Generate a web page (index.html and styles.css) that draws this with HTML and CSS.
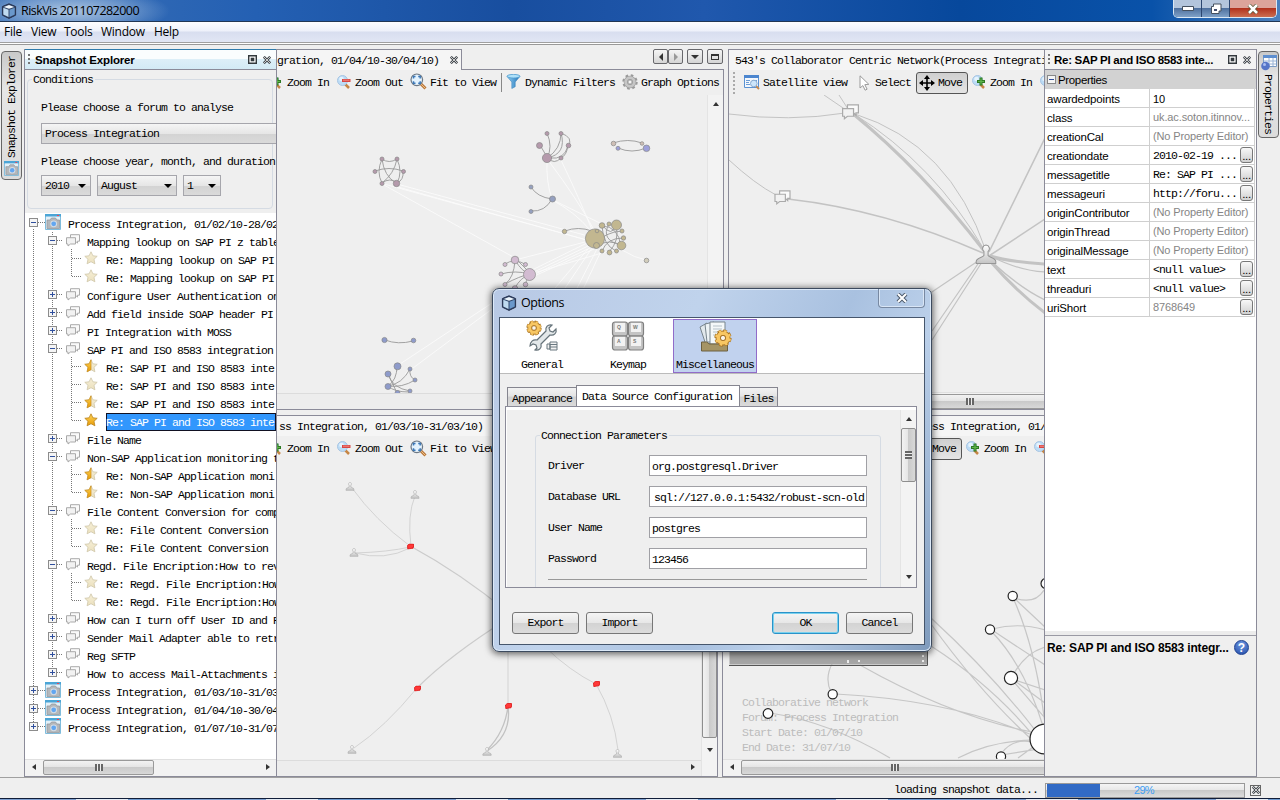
FILE: index.html
```html
<!DOCTYPE html>
<html lang="en">
<head>
<meta charset="utf-8">
<title>RiskVis 201107282000</title>
<link rel="stylesheet" href="styles.css">
</head>
<body>
<svg class="defs" width="0" height="0">
  <defs>
    <linearGradient id="gStar" x1="0" x2="0" y1="0" y2="1"><stop offset="0" stop-color="#ffd65a"/><stop offset="1" stop-color="#e79a05"/></linearGradient>
    <linearGradient id="gPale" x1="0" x2="0" y1="0" y2="1"><stop offset="0" stop-color="#f6efd8"/><stop offset="1" stop-color="#ebe0bd"/></linearGradient>
    <linearGradient id="gFunnel" x1="0" x2="1"><stop offset="0" stop-color="#8fd0f2"/><stop offset="1" stop-color="#2272b8"/></linearGradient>
    <linearGradient id="gGray" x1="0" x2="0" y1="0" y2="1"><stop offset="0" stop-color="#fff"/><stop offset="1" stop-color="#c4c4c4"/></linearGradient>
    <symbol id="cube" viewBox="0 0 16 16"><path d="M8 .8l6.600 2.700v8.700L8 15.400 1.400 12.200V3.500z" fill="#33486c" stroke="#26324f"/><path d="M8 1.900l5.200 2L8 5.800 2.800 3.900z" fill="#edf5fc"/><path d="M2.300 4.800L7.500 6.700v7.300l-5.200-2.500z" fill="#bfdaf0"/><path d="M13.700 4.800L8.500 6.700v7.300l5.200-2.500z" fill="#6a98cb"/></symbol>
    <symbol id="camera" viewBox="0 0 16 16"><path d="M.5 .5h15v15H.5z" fill="#e3f0f8" stroke="#7fbcdc"/><path d="M0 0h16v2.500H0z" fill="#4ba5d6"/><path d="M12 1h2v1h-2z" fill="#e45"/><path d="M2 6h3l1.500-2h4L12 6h2.500v8.500H2z" fill="#b4b7ba" stroke="#909498" stroke-width=".7"/><circle cx="8.700" cy="9.800" r="3.400" fill="#d5dce4"/><circle cx="8.700" cy="9.800" r="2.400" fill="#62a6f0"/></symbol>
    <symbol id="chat" viewBox="0 0 14 13"><path d="M4.500 .7h9v6.500h-2v2l-2-2h-5z" fill="#fafafa" stroke="#aaa"/><path d="M.5 3.700h9v6.300h-5l-2.500 2V10H.5z" fill="#f2f2f2" stroke="#aaa"/></symbol>
    <symbol id="star0" viewBox="0 0 14 14"><path d="M7 .8l1.900 4 4.300.500-3.200 3 .9 4.500L7 10.700l-3.900 2.100.9-4.500-3.200-3 4.300-.5z" fill="url(#gPale)" stroke="#cfc7a9" stroke-width=".8"/></symbol>
    <symbol id="star2" viewBox="0 0 14 14"><path d="M7 .8l1.900 4 4.300.500-3.200 3 .9 4.500L7 10.700l-3.900 2.100.9-4.500-3.200-3 4.300-.5z" fill="url(#gStar)" stroke="#b9821a" stroke-width=".8"/></symbol>
    <symbol id="star1" viewBox="0 0 14 14"><use href="#star0"/><path d="M7 .8v9.900l-3.900 2.100.9-4.500-3.200-3 4.300-.5z" fill="url(#gStar)" stroke="#c98c1c" stroke-width=".7"/></symbol>
    <symbol id="lens" viewBox="0 0 14 14"><path d="M8 9l4 4" stroke="#c68645" stroke-width="2.500"/><circle cx="5.500" cy="5.500" r="5" fill="#bcdcf6" stroke="#a7c4e2"/><circle cx="4.500" cy="4" r="2.300" fill="#e5f3fd"/></symbol>
    <symbol id="zin" viewBox="0 0 14 14"><use href="#lens"/><path d="M9 2.500v8M5 6.500h8" stroke="#2d7a24" stroke-width="3"/><path d="M9 3.500v6M6 6.500h6" stroke="#5fb54c" stroke-width="1.200"/></symbol>
    <symbol id="zout" viewBox="0 0 14 14"><use href="#lens"/><path d="M5 5.500h8.500" stroke="#d94744" stroke-width="3"/><path d="M6 5.200h6.500" stroke="#f28b86" stroke-width="1"/></symbol>
    <symbol id="fit" viewBox="0 0 17 17"><path d="M10.500 10.500l5 5" stroke="#b9773c" stroke-width="3"/><path d="M11 11l4.500 4.500" stroke="#efc183" stroke-width="1"/><circle cx="6.800" cy="6.800" r="5.800" fill="#e3f2fd" stroke="#6d7884" stroke-width="1.200"/><path d="M3.500 5.500v-2h2M8.200 3.500h2v2M10.200 8.200v2h-2M5.500 10.200h-2v-2" fill="none" stroke="#3c78b8" stroke-width="1.500"/></symbol>
    <symbol id="funnel" viewBox="0 0 14 15"><path d="M.6 2.500L5.300 8v6.500l3.400-1.800V8l4.700-5.500z" fill="url(#gFunnel)" stroke="#3e87bf" stroke-width=".6"/><ellipse cx="7" cy="2.200" rx="6.500" ry="1.800" fill="#aee0f8" stroke="#4b9bd0" stroke-width=".8"/></symbol>
    <symbol id="gear" viewBox="0 0 16 16"><circle cx="8" cy="8" r="6.500" fill="none" stroke="#9a9a9a" stroke-width="2.400" stroke-dasharray="2.550 2.550"/><circle cx="8" cy="8" r="4.300" fill="none" stroke="#9a9a9a" stroke-width="4"/><circle cx="8" cy="8" r="4.300" fill="none" stroke="#c6c6c6" stroke-width="2.800"/><circle cx="8" cy="8" r="2" fill="#f4f4f4" stroke="#888" stroke-width=".7"/></symbol>
    <symbol id="goldgear" viewBox="0 0 18 18"><circle cx="9" cy="9" r="7.100" fill="none" stroke="#a87322" stroke-width="3" stroke-dasharray="3.700 1.870"/><circle cx="9" cy="9" r="5" fill="none" stroke="#a87322" stroke-width="5"/><circle cx="9" cy="9" r="7" fill="none" stroke="#f8c763" stroke-width="2" stroke-dasharray="2.500 3.070" stroke-dashoffset="-.6"/><circle cx="9" cy="9" r="4.800" fill="none" stroke="#f8c763" stroke-width="3.600"/><circle cx="9" cy="9" r="2.600" fill="#faf6ee" stroke="#a87322"/></symbol>
    <symbol id="sat" viewBox="0 0 16 15"><path d="M.5 .5h14v12H.5z" fill="#f4f8fd" stroke="#5a92d3"/><path d="M0 0h15v3H0z" fill="#4c86cf"/><path d="M2 5.500h4M2 7.500h3M2 9.500h4M8 5.500h5" stroke="#6c9dd6"/><path d="M12 11l3 3" stroke="#c58a50" stroke-width="2"/><circle cx="9.800" cy="8.500" r="3.300" fill="#cde6fb" stroke="#89abd0"/></symbol>
    <symbol id="cursor" viewBox="0 0 11 16"><path d="M1 .8l8.800 8.500-4 .4 2.300 4.500-2 1-2.200-4.600L1 13z" fill="#fff" stroke="#9a9a9a"/></symbol>
    <symbol id="move" viewBox="0 0 16 16"><path d="M8 2v12M2 8h12" stroke="#000" stroke-width="1.600"/><path d="M8 0l3 4H5zM8 16l3-4H5zM0 8l4-3v6zM16 8l-4-3v6z"/></symbol>
    <symbol id="x" viewBox="0 0 8 8"><path d="M.8 .8l6.400 6.400M7.200 .8L.8 7.200" stroke="#484d52" stroke-width="2.600"/><path d="M.8 .8l6.400 6.400M7.200 .8L.8 7.200" stroke="#eee" stroke-width=".8"/></symbol>
    <symbol id="pin" viewBox="0 0 9 9"><path d="M.7 .7h7.600v7.600H.7z" fill="#fff" stroke="#33393d" stroke-width="1.400"/><path d="M2.700 2.700h3.600v3.600H2.700z" fill="#33393d"/></symbol>
    <symbol id="person" viewBox="0 0 20 20"><path d="M10 1a3.400 3.400 0 0 1 2 6v4c1 2 7 2 7.300 5.500v2H.7v-2C1 13 7 13 8 11V7a3.400 3.400 0 0 1 2-6z" fill="url(#gGray)" stroke="#969696"/></symbol>
    <symbol id="chip" viewBox="0 0 7 6"><path d="M2.200 .5h4.300v3.300H6v1H5L.8 5.600.5 2z" fill="#ff3838" stroke="#dc1212" stroke-width=".8"/></symbol>
  </defs>
</svg>

<header class="titlebar">
  <svg class="app-icon"><use href="#cube"/></svg><span>RiskVis 201107282000</span>
  <div class="win-controls">
    <b class="wc"><svg width="12" height="6"><path d="M.5 .5h11v4H.5z" fill="#fff" stroke="#44505f"/></svg></b>
    <b class="wc"><svg width="12" height="12"><path d="M3.500 1h7.500v7h-2v2.500H1.500v-7h2z" fill="#fff" stroke="#44505f"/><path d="M4 6h3v2H4z" fill="#44506f"/></svg></b>
    <b class="wc close"><svg width="12" height="10"><path d="M2 1l8 8M10 1L2 9" stroke="#553" stroke-width="4"/><path d="M2 1l8 8M10 1L2 9" stroke="#fff" stroke-width="2.500"/></svg></b>
  </div>
</header>
<nav class="menubar"><span>File</span><span>View</span><span>Tools</span><span>Window</span><span>Help</span></nav>

<main class="workspace">
  <aside class="rail">
    <div class="rail-tab left"><svg class="i15"><use href="#camera"/></svg><span>Snapshot Explorer</span></div>
  </aside>

  <section class="explorer">
    <h2 class="view-head active"><i class="grip"></i><span>Snapshot Explorer</span><svg class="i9"><use href="#pin"/></svg><svg class="i8"><use href="#x"/></svg></h2>
    <div class="cond-wrap">
      <div class="cond"><span class="legend">Conditions</span>
        <label>Please choose a forum to analyse</label>
        <div class="combo forum">Process Integration</div>
        <label class="l2">Please choose year, month, and duration</label>
        <div class="combos"><div class="combo c1">2010<i></i></div><div class="combo c2">August<i></i></div><div class="combo c3">1<i></i></div></div>
      </div>
    </div>
    <div class="tree">
      <svg class="tree-lines" viewBox="25 213 251 546"><path d="M33.500 229V727M34 222.500h11M34 690.500h11M34 708.500h11M34 726.500h11M52.500 232V673M53 240.500h9M53 294.500h9M53 312.500h9M53 330.500h9M53 348.500h9M53 438.500h9M53 456.500h9M53 510.500h9M53 564.500h9M53 618.500h9M53 636.500h9M53 654.500h9M53 672.500h9M71.500 249v28M72 258.500h10M72 276.500h10M71.500 357v64M72 366.500h10M72 384.500h10M72 402.500h10M72 420.500h10M71.500 465v28M72 474.500h10M72 492.500h10M71.500 519v28M72 528.500h10M72 546.500h10M71.500 573v28M72 582.500h10M72 600.500h10"/></svg>
      <ul>
        <li class="d1 open"><i></i><svg><use href="#camera"/></svg><span>Process Integration, 01/02/10-28/02</span></li>
        <li class="d2 open"><i></i><svg><use href="#chat"/></svg><span>Mapping lookup on SAP PI z table</span></li>
        <li class="d3"><svg><use href="#star0"/></svg><span>Re: Mapping lookup on SAP PI</span></li>
        <li class="d3"><svg><use href="#star0"/></svg><span>Re: Mapping lookup on SAP PI</span></li>
        <li class="d2"><i></i><svg><use href="#chat"/></svg><span>Configure User Authentication on</span></li>
        <li class="d2"><i></i><svg><use href="#chat"/></svg><span>Add field inside SOAP header PI</span></li>
        <li class="d2"><i></i><svg><use href="#chat"/></svg><span>PI Integration with MOSS</span></li>
        <li class="d2 open"><i></i><svg><use href="#chat"/></svg><span>SAP PI and ISO 8583 integration</span></li>
        <li class="d3"><svg><use href="#star1"/></svg><span>Re: SAP PI and ISO 8583 inte</span></li>
        <li class="d3"><svg><use href="#star0"/></svg><span>Re: SAP PI and ISO 8583 inte</span></li>
        <li class="d3"><svg><use href="#star1"/></svg><span>Re: SAP PI and ISO 8583 inte</span></li>
        <li class="d3 sel"><svg><use href="#star2"/></svg><span>Re: SAP PI and ISO 8583 inte</span></li>
        <li class="d2"><i></i><svg><use href="#chat"/></svg><span>File Name</span></li>
        <li class="d2 open"><i></i><svg><use href="#chat"/></svg><span>Non-SAP Application monitoring t</span></li>
        <li class="d3"><svg><use href="#star1"/></svg><span>Re: Non-SAP Application moni</span></li>
        <li class="d3"><svg><use href="#star1"/></svg><span>Re: Non-SAP Application moni</span></li>
        <li class="d2 open"><i></i><svg><use href="#chat"/></svg><span>File Content Conversion for comp</span></li>
        <li class="d3"><svg><use href="#star0"/></svg><span>Re: File Content Conversion</span></li>
        <li class="d3"><svg><use href="#star0"/></svg><span>Re: File Content Conversion</span></li>
        <li class="d2 open"><i></i><svg><use href="#chat"/></svg><span>Regd. File Encription:How to rev</span></li>
        <li class="d3"><svg><use href="#star0"/></svg><span>Re: Regd. File Encription:How</span></li>
        <li class="d3"><svg><use href="#star0"/></svg><span>Re: Regd. File Encription:How</span></li>
        <li class="d2"><i></i><svg><use href="#chat"/></svg><span>How can I turn off User ID and P</span></li>
        <li class="d2"><i></i><svg><use href="#chat"/></svg><span>Sender Mail Adapter able to retr</span></li>
        <li class="d2"><i></i><svg><use href="#chat"/></svg><span>Reg SFTP</span></li>
        <li class="d2"><i></i><svg><use href="#chat"/></svg><span>How to access Mail-Attachments i</span></li>
        <li class="d1"><i></i><svg><use href="#camera"/></svg><span>Process Integration, 01/03/10-31/03</span></li>
        <li class="d1"><i></i><svg><use href="#camera"/></svg><span>Process Integration, 01/04/10-30/04</span></li>
        <li class="d1"><i></i><svg><use href="#camera"/></svg><span>Process Integration, 01/07/10-31/07</span></li>
      </ul>
    </div>
    <div class="hscroll"><b class="arr l"></b><div class="thumb ex"><i></i></div><b class="arr r"></b></div>
  </section>

  <section class="editors">
    <div class="erow top">
      <div class="pane p1">
        <div class="tabs"><div class="tab">gration, 01/04/10-30/04/10)<svg class="i8"><use href="#x"/></svg></div>
          <div class="tab-btns"><b><i class="tl"></i></b><b><i class="tr"></i></b><b class="sp"><i class="td"></i></b><b class="sp2"><i class="tm"></i></b></div></div>
        <div class="body">
          <div class="tools cut"><svg class="z"><use href="#zin"/></svg><span>Zoom In</span><svg class="z g"><use href="#zout"/></svg><span>Zoom Out</span><svg class="fit"><use href="#fit"/></svg><span>Fit to View</span><i class="sep"></i><svg class="fn"><use href="#funnel"/></svg><span>Dynamic Filters</span><svg class="gr"><use href="#gear"/></svg><span>Graph Options</span></div>
          <div class="view">
            <div class="canvas-col">
            <svg class="canvas" viewBox="277 95 430 298" preserveAspectRatio="xMinYMin slice">
              <g fill="none" stroke="#fafafa" stroke-width=".9"><path d="M384 185L515 258M384 184L587 240M397 184L588 236M398 187L590 241M547 160Q546 182 552 199M548 160Q578 200 594 230M561 160Q580 200 592 230M552 200Q575 212 590 230M553 200L610 228M515 260L589 241M528 272L587 243M530 274L590 245M533 275L592 247M530 278L594 249M545 300L588 249M557 300L592 248M571 300L598 247M578 300L603 247M622 250Q635 258 646 260M397 366L492 303M405 374L492 309M616 249L530 274"/></g>
              <g fill="none" stroke="#999" stroke-width=".9"><path d="M382 159Q389 164 397 159M375 171Q389 166 403 171M382 159Q376 172 382 183M382 159Q384 176 396 183M397 159Q394 174 382 183M397 159Q403 172 397 183M382 183Q390 177 397 183M403 171Q404 180 397 183M547 133Q553 147 547 158M561 133Q561 149 547 158M561 133Q567 154 547 158M561 133Q574 138 568 146Q564 160 550 158M540 145L547 157M568 145Q567 155 561 158M561 158Q554 165 548 158M613 143Q628 138 642 143M618 148Q632 154 646 148M531 187Q537 197 552 199M531 211Q545 212 552 199M565 231Q578 226 592 231M602 225Q612 238 616 225M609 224Q600 240 621 245M602 226Q603 245 616 251M622 231Q605 232 595 244M623 238Q607 238 602 251M616 226Q620 240 609 252M596 246Q610 238 622 246M602 226Q618 226 621 246M505 264Q514 258 525 264M515 260Q514 278 505 284M515 260Q522 272 530 274M501 274Q515 270 530 274M505 284Q520 276 530 274M515 288Q520 278 530 274M515 258L530 273M525 284L530 274M385 340Q398 345 413 341M397 366Q397 380 388 386M388 374Q392 388 410 391M410 369Q402 384 388 386M410 369Q409 377 415 380M415 380Q402 388 388 386M388 386Q394 392 409 392M397 393Q392 382 388 374"/></g>
              <g stroke="#888" stroke-width=".7">
                <g fill="#b59aac"><circle cx="382" cy="159" r="2"/><circle cx="397" cy="159" r="2"/><circle cx="375" cy="171.500" r="2"/><circle cx="403.500" cy="171.500" r="2"/><circle cx="382" cy="183.500" r="2"/><circle cx="396.500" cy="183.500" r="3.200"/><circle cx="547" cy="133.500" r="2"/><circle cx="561" cy="133.500" r="2"/><circle cx="539.500" cy="145.500" r="3"/><circle cx="568.500" cy="145.500" r="2.300"/><circle cx="547" cy="158" r="4.600"/><circle cx="561" cy="158" r="2"/></g>
                <g fill="#cfbfb5"><circle cx="613.500" cy="143.500" r="2.300"/><circle cx="642" cy="143.500" r="1.800"/><circle cx="646.500" cy="260.500" r="2.300" fill="#d2cdbb"/></g>
                <g fill="#9da0da"><circle cx="618" cy="148.300" r="2"/><circle cx="646.500" cy="148.300" r="3.300"/></g>
                <g fill="#95a0c0"><circle cx="531" cy="187" r="2"/><circle cx="552.500" cy="199" r="3"/><circle cx="531" cy="211.500" r="2"/></g>
                <g fill="#8e9bcb"><circle cx="384.500" cy="340" r="2.600"/><circle cx="413.500" cy="340.500" r="2.300"/><circle cx="397.500" cy="366.300" r="3.500"/><circle cx="388" cy="374" r="3"/><circle cx="410" cy="369" r="2"/><circle cx="415" cy="380" r="2"/><circle cx="388" cy="386.500" r="3"/><circle cx="410" cy="391" r="2"/><circle cx="397.500" cy="393" r="2.500"/></g>
                <g fill="#c2b790"><circle cx="595" cy="238.500" r="9.600"/><circle cx="616.500" cy="225" r="5"/><circle cx="621.500" cy="245.500" r="4.300"/><circle cx="602" cy="225.500" r="2.800"/><circle cx="609" cy="224" r="2"/><circle cx="622" cy="231" r="2"/><circle cx="623.500" cy="238" r="2.200"/><circle cx="596.500" cy="245.500" r="3"/><circle cx="597" cy="231" r="1.800"/><circle cx="602" cy="251" r="2"/><circle cx="609.500" cy="252.500" r="2.400"/><circle cx="616.500" cy="251" r="2"/><circle cx="564.500" cy="231.500" r="2.200"/></g>
                <g fill="#d2bbd1"><circle cx="515" cy="260" r="3.800"/><circle cx="505" cy="264.500" r="2"/><circle cx="525.500" cy="264.500" r="2"/><circle cx="529.500" cy="274.500" r="6"/><circle cx="501" cy="274" r="2"/><circle cx="505" cy="284.500" r="2"/><circle cx="525.500" cy="284.500" r="2.300"/><circle cx="515" cy="288.500" r="2.800"/></g>
              </g>
            </svg>
            <div class="htrack"></div></div>
            <div class="vscroll"><b class="arr u"></b></div>
          </div>
        </div>
      </div>
      <div class="pane p2">
        <div class="tabs"><div class="tab wide">543's Collaborator Centric Network(Process Integration)</div></div>
        <div class="body">
          <div class="tools"><i class="grip"></i><svg class="st"><use href="#sat"/></svg><span>Satellite view</span><i class="sep"></i><svg class="cu"><use href="#cursor"/></svg><span>Select</span><b class="pressed"><svg class="i16"><use href="#move"/></svg>Move</b><svg class="z m5"><use href="#zin"/></svg><span>Zoom In</span><svg class="z g"><use href="#zout"/></svg></div>
          <svg class="canvas" viewBox="729 95 315 297" preserveAspectRatio="xMinYMin slice">
            <g fill="none" stroke="#c3c3c3"><path d="M824 95L846 110M839 95L848 109M729 114Q790 122 845 113M729 160Q755 184 776 195"/><path d="M788 199Q885 210 983 253" stroke-width="1.500"/><path d="M852 113Q922 170 985 252" stroke-width="3"/><path d="M854 114Q934 164 985 251"/><path d="M855 114Q950 144 986 251"/><path d="M989 252L1045 138M989 256L1045 219" stroke-width="1.600"/><path d="M990 256Q1010 262 1045 264" stroke-width="3"/><path d="M990 256Q1020 271 1045 272M978 261L920 300M980 261L932 331M982 262L932 340" stroke-width="1.200"/><path d="M991 262Q1015 290 1045 313" stroke-width="3"/><path d="M992 262Q1020 288 1045 300" stroke-width="1.500"/></g>
            <use href="#chat" x="842" y="104" width="17" height="16"/><use href="#chat" x="774" y="190" width="17" height="15"/><use href="#person" x="975" y="244" width="22" height="21"/>
          </svg>
          <div class="hscroll"><div class="thumb tr-thumb"><i></i></div></div>
        </div>
      </div>
    </div>
    <div class="erow bottom">
      <div class="pane p3">
        <div class="tabs"><div class="tab wide pl">ss Integration, 01/03/10-31/03/10)</div></div>
        <div class="body">
          <div class="tools cut"><svg class="z"><use href="#zin"/></svg><span>Zoom In</span><svg class="z g"><use href="#zout"/></svg><span>Zoom Out</span><svg class="fit"><use href="#fit"/></svg><span>Fit to View</span></div>
          <div class="view">
            <div class="canvas-col">
            <svg class="canvas" viewBox="277 461 424 299" preserveAspectRatio="xMinYMin slice">
              <g fill="none" stroke="#d3d3d3"><path d="M352 488Q375 520 410 546M415 496Q407 515 411 546M355 553Q388 552 410 547M355 553Q385 561 410 548"/><path d="M412 547Q460 573 509 613" stroke="#cbcbcb" stroke-width="1.200"/><path d="M509 618Q450 655 417 688" stroke="#cbcbcb" stroke-width="1.200"/><path d="M417 688Q385 727 354 748M508 640V706M545 647Q570 671 596 684Q614 715 618 750"/><path d="M508 706Q505 732 487 750M508 706Q512 735 487 751" stroke="#c2c2c2" stroke-width="1.300"/></g>
              <use href="#person" x="345.500" y="482" width="9" height="9"/><use href="#person" x="410.500" y="490" width="9" height="9"/><use href="#person" x="349.500" y="548" width="9" height="9"/><use href="#person" x="347.500" y="745" width="9" height="9"/><use href="#person" x="482" y="747" width="10" height="9"/><use href="#person" x="613" y="749" width="9" height="9"/>
              <use href="#chip" x="407" y="543.500" width="7" height="6"/><use href="#chip" x="414" y="685.500" width="7" height="6"/><use href="#chip" x="505" y="703" width="7" height="6"/><use href="#chip" x="593" y="681" width="7" height="6"/>
            </svg>
            <div class="htrack"><b class="arr r"></b></div></div>
            <div class="vscroll"><div class="vthumb"></div><b class="arr d"></b></div>
          </div>
        </div>
      </div>
      <div class="pane p4">
        <div class="tabs"><div class="tab wide"><span class="p4t">Network(Process Integration, 01/07/10)</span></div></div>
        <div class="body">
          <div class="tools"><b class="pressed p4m"><svg class="i16"><use href="#move"/></svg>Move</b><svg class="z m5"><use href="#zin"/></svg><span>Zoom In</span><svg class="z g"><use href="#zout"/></svg></div>
          <div class="canvas-box">
            <svg class="canvas" viewBox="723 461 322 298" preserveAspectRatio="xMinYMin slice">
              <g fill="none" stroke="#c6c6c6" stroke-width="1.200"><path d="M931 618Q990 672 1035 730M931 624Q980 692 1030 738M931 646Q990 684 1032 734M833 662Q824 678 831 692M836 694Q950 700 1032 735M860 665Q950 716 1032 732M770 713Q830 722 890 758M1014 598Q1035 605 1044 590M1014 598L1045 627M1014 600Q1036 650 1045 724M992 629Q1020 622 1045 630M992 630L1045 665M992 632Q1024 665 1043 726M1013 675Q1025 653 1045 647M1015 680L1045 690M1015 681L1045 703M1014 682L1045 718M958 758Q990 741 1032 740M1001 754Q1012 738 1032 742M1001 755L1045 748M1018 758L1040 742"/></g>
            </svg>
            <div class="net-info">Collaborative network<br>Forum: Process Integration<br>Start Date: 01/07/10<br>End Date: 31/07/10</div>
            <svg class="canvas over" viewBox="723 461 322 298" preserveAspectRatio="xMinYMin slice">
              <path d="M729.500 600H927.500V664.500H729.500z" fill="#a6a6a6"/><path d="M729 665.500H927.500V600" fill="none" stroke="#555"/><path d="M847 660h2v3h-2zM858 660h2v2h-2zM922 655h2v2h-2zM922 660h2v2h-2z" fill="#eee"/>
              <g fill="#fff" stroke="#222" stroke-width="1.200"><circle cx="1012.700" cy="596" r="4.600"/><circle cx="1046" cy="583.500" r="5"/><circle cx="990" cy="629.500" r="4.600"/><circle cx="1011" cy="678" r="6.600"/><circle cx="832.700" cy="694.300" r="4.600"/><circle cx="768" cy="713.500" r="4.800"/><circle cx="1001" cy="756.500" r="4.600"/><circle cx="1045" cy="739" r="15"/></g>
            </svg>
          </div>
          <div class="hscroll"><b class="arr l"></b><div class="thumb br-thumb"><i></i></div></div>
        </div>
      </div>
    </div>
  </section>

  <section class="props">
    <h2 class="view-head"><i class="grip"></i><span>Re: SAP PI and ISO 8583 inte...</span><svg class="i9"><use href="#pin"/></svg><svg class="i8"><use href="#x"/></svg></h2>
    <div class="cat"><i></i>Properties</div>
    <div class="prow"><span>awardedpoints</span><em class="dk">10</em></div>
    <div class="prow"><span>class</span><em>uk.ac.soton.itinnov...</em></div>
    <div class="prow"><span>creationCal</span><em>(No Property Editor)</em></div>
    <div class="prow"><span>creationdate</span><em class="mono">2010-02-19 ...</em><b>...</b></div>
    <div class="prow"><span>messagetitle</span><em class="mono">Re: SAP PI ...</em><b>...</b></div>
    <div class="prow"><span>messageuri</span><em class="mono">http://foru...</em><b>...</b></div>
    <div class="prow"><span>originContributor</span><em>(No Property Editor)</em></div>
    <div class="prow"><span>originThread</span><em>(No Property Editor)</em></div>
    <div class="prow"><span>originalMessage</span><em>(No Property Editor)</em></div>
    <div class="prow"><span>text</span><em class="mono">&lt;null value&gt;</em><b>...</b></div>
    <div class="prow"><span>threaduri</span><em class="mono">&lt;null value&gt;</em><b>...</b></div>
    <div class="prow"><span>uriShort</span><em>8768649</em><b>...</b></div>
    <div class="prop-desc"><strong>Re: SAP PI and ISO 8583 integr...</strong><b class="help">?</b></div>
  </section>

  <aside class="rail right">
    <div class="rail-tab rt"><svg class="i16" viewBox="0 0 16 16"><path d="M2.500 .5h13v11h-13z" fill="#fff" stroke="#7c9cc4"/><path d="M2 0h14v3H2z" fill="#5e8fd0"/><path d="M3 6h12M3 9h12M8 3v8M12 3v8" stroke="#9ab4d6"/><circle cx="4.500" cy="11" r="4.300" fill="#5575c8"/><circle cx="3.500" cy="9.500" r="1.500" fill="#a9bdf0"/></svg><span>Properties</span></div>
  </aside>
</main>

<footer class="status"><span>loading snapshot data...</span><div class="progress"><div class="bar" style="width:27%"></div><span>29%</span></div><b class="stop"><svg class="i8"><use href="#x"/></svg></b></footer>
<div class="taskbar"></div>

<section class="dialog">
  <div class="dlg-title"><svg class="app-icon"><use href="#cube"/></svg><span>Options</span><b><svg width="12" height="10"><path d="M2 1l8 8M10 1L2 9" stroke="#4d5a6c" stroke-width="4"/><path d="M2 1l8 8M10 1L2 9" stroke="#fff" stroke-width="2"/></svg></b></div>
  <div class="dlg-body">
    <div class="cats">
      <div class="catbtn"><svg viewBox="0 0 34 32"><use href="#goldgear" x="1" y="0" width="16" height="16"/><path d="M27 5c-4-1-7 2-6 6l-9 9c-4-1-7 2-7 6l3-2 3 1 1 3-2 2c4 1 7-2 6-6l9-9c4 1 7-2 6-6l-3 3-3-1-1-3z" fill="#e3e8ea" stroke="#66737a" stroke-width="1.200"/><path d="M22 24h3v5h-3zM25 22h7v8h-7zM25 24.500h7M25 27h7" fill="#f2f2f2" stroke="#6a7880"/></svg>General</div>
      <div class="catbtn"><svg viewBox="0 0 34 32"><g fill="#c4c4c4" stroke="#808080" stroke-width="1.200"><rect x="1.500" y="2" width="15" height="14" rx="2.500"/><rect x="17.500" y="2" width="15" height="14" rx="2.500"/><rect x="1.500" y="16" width="15" height="14" rx="2.500"/><rect x="17.500" y="16" width="15" height="14" rx="2.500"/></g><g fill="#f2f2f2"><rect x="4" y="3" width="10" height="9"/><rect x="20" y="3" width="10" height="9"/><rect x="4" y="17" width="10" height="9"/><rect x="20" y="17" width="10" height="9"/></g><g class="keys"><text x="6" y="9">Q</text><text x="22" y="9">W</text><text x="6" y="23">A</text><text x="22" y="23">S</text></g></svg>Keymap</div>
      <div class="catbtn on"><svg viewBox="0 0 34 32"><path d="M2 7l7-4 4 20-5 2z" fill="#e1e8ec" stroke="#78858d"/><path d="M7 4l9-2 2 20H9z" fill="#edf3f5" stroke="#78858d"/><path d="M12 2h15v22H12z" fill="#f4f8f9" stroke="#78858d"/><path d="M15 6h9M15 9h9M15 12h7M15 15h7" stroke="#b5c1c8"/><path d="M3.500 22h5l3 2h18v7h-26z" fill="#a59465" stroke="#6d6040"/><use href="#goldgear" x="16" y="9" width="18" height="18"/></svg>Miscellaneous</div>
    </div>
    <div class="dtabs"><span class="t-app">Appearance</span><span class="t-on">Data Source Configuration</span><span class="t-files">Files</span></div>
    <div class="dpanel">
      <div class="form">
        <div class="fs"><span class="legend">Connection Parameters</span>
          <div class="fr"><label>Driver</label><div>org.postgresql.Driver</div></div>
          <div class="fr"><label>Database URL</label><div class="rt-field">sql://127.0.0.1:5432/robust-scn-old</div></div>
          <div class="fr"><label>User Name</label><div>postgres</div></div>
          <div class="fr"><label>Password</label><div>123456</div></div>
          <hr>
        </div>
      </div>
      <div class="vscroll dl"><b class="arr u"></b><div class="dthumb"><i></i></div><b class="arr d"></b></div>
    </div>
    <div class="dbtns"><button>Export</button><button>Import</button><button class="ok">OK</button><button>Cancel</button></div>
  </div>
</section>
</body>
</html>
```

FILE: styles.css
```css
* { box-sizing: border-box; }
body {
  margin: 0; width: 1280px; height: 800px; overflow: hidden; position: relative;
  display: flex; flex-direction: column; background: #efefef; color: #000;
  font: 11.500px/14px "Liberation Mono", monospace; letter-spacing: -.9px;
  white-space: nowrap; cursor: default;
}
svg { flex: none; display: block; }
.defs { position: absolute; }
i { font-style: normal; }
ul { list-style: none; margin: 0; padding: 0; }
.i8 { width: 8px; height: 8px; }
.i9 { width: 9px; height: 9px; }
.i15 { width: 15px; height: 15px; }
.i16 { width: 16px; height: 16px; }

/* Window frame */
.titlebar {
  height: 22px; flex: none; display: flex; align-items: center; padding-left: 1px;
  background: radial-gradient(ellipse 100px 24px at 70px 11px, rgba(190,210,232,.85), rgba(150,182,220,.6) 55%, transparent 100%), linear-gradient(90deg, #3c71b6, #2460b3 20%, #184e9f 40%, #2058ad 55%, #07489c 75%, #0952a9 90%, #4b80bd);
  border-bottom: 1px solid #223755;
  font: 12.500px/20px "Open Sans", sans-serif; letter-spacing: -.55px;
}
.app-icon { width: 16px; height: 16px; margin-right: 4px; }
.win-controls { margin-left: auto; margin-right: 3px; align-self: flex-start; display: flex; border: 1px solid #dbe8f4; border-top: 0; border-radius: 0 0 5px 5px; overflow: hidden; }
.wc { width: 28px; height: 17px; display: flex; align-items: center; justify-content: center; border-right: 1px solid #2b4670; background: linear-gradient(#b3c5dc 0 45%, #4f719f 50%, #7fa1c7); }
.wc.close { width: 46px; border-right: 0; background: linear-gradient(#dca49a 0 45%, #b2331e 50%, #cc6e50); }
.menubar { height: 20px; flex: none; display: flex; padding-left: 4px; background: linear-gradient(#fdfdff, #eef1fa 45%, #d8deef 50%, #e1e6f4); font: 12px/19px "Open Sans", sans-serif; letter-spacing: -.25px; }
.menubar span:nth-child(1) { width: 27px; }
.menubar span:nth-child(2) { width: 33px; }
.menubar span:nth-child(3) { width: 37px; }
.menubar span:nth-child(4) { width: 53px; }

.workspace { height: 735px; flex: none; display: flex; padding-top: 7px; position: relative; background: linear-gradient(#a0a0a0 0 1px, #fff 1px 2px, #999 2px 3px, #efefef 3px); }
.rail { width: 24px; flex: none; padding: 2px 2px 0 1px; }
.right { width: 23px; padding-left: 1px; }
.rail-tab { width: 21px; border: 1.500px solid #666; border-radius: 4px; background: linear-gradient(#c9c9c9, #e6e6e6 30%, #dcdcdc); display: flex; flex-direction: column; align-items: center; }
.rail-tab span { writing-mode: vertical-rl; line-height: 17px; }
.rail-tab.left { height: 129px; flex-direction: column-reverse; padding-bottom: 3px; }
.left span { transform: rotate(180deg); margin-bottom: 3px; }
.rt { height: 87px; padding-top: 3px; }
.rt span { margin-top: 3px; }

/* Snapshot explorer */
.explorer { width: 253px; height: 728px; flex: none; display: flex; flex-direction: column; border: 1px solid #8b8b99; border-top: 0; overflow: hidden; }
.view-head { margin: 0; height: 21px; flex: none; display: flex; align-items: center; padding: 0 5px 0 3px; border-top: 1px solid #9393a1; border-bottom: 1px solid #8b8b99; background: #f3f3f3; font: bold 11.500px/18px "Liberation Sans", sans-serif; letter-spacing: -.15px; }
.view-head.active { border-top-color: #2f7bab; background: linear-gradient(#fafdfe 0 45%, #ddeff8 50%, #d3eaf5); }
.props .view-head { letter-spacing: -.28px; }
.props .grip { margin-right: 4px; }
.view-head span { flex: 1; }
.view-head .i9 { margin-right: 6px; }
.grip { width: 2px; height: 12px; margin-right: 5px; background: repeating-linear-gradient(#777 0 2px, transparent 2px 4px); flex: none; }
.cond-wrap { height: 143px; flex: none; padding: 9px 3px 4px 2px; }
.cond { height: 130px; border: 1px solid #d5dbe3; border-radius: 4px; position: relative; padding: 21px 0 0 13px; display: flex; flex-direction: column; align-items: flex-start; }
.legend { position: absolute; top: -7px; left: 4px; background: #efefef; padding: 0 2px 0 1px; line-height: 14px; }
.combo { border: 1px solid #a6a6ac; height: 21px; line-height: 20px; padding-left: 3px; background: linear-gradient(#f5f5f5, #e6e6e6 50%, #d3d3d3 52%, #dadada); display: flex; align-items: center; }
.cond label { line-height: 14px; }
.cond .forum { width: 250px; margin-top: 8px; flex: none; }
.l2 { margin-top: 11px; }
.combos { display: flex; gap: 6px; margin-top: 6px; }
.combo i { border: 4px solid transparent; border-top: 4px solid #000; border-bottom: 0; margin-left: auto; margin-right: 4px; }
.c1 { width: 50px; } .c2 { width: 80px; } .c3 { width: 38px; }
.tree { height: 546px; flex: none; background: #fff; position: relative; padding-top: 2px; overflow: hidden; }
.tree-lines { position: absolute; left: 0; top: 0; width: 251px; height: 546px; }
.tree-lines path { stroke: #777; stroke-dasharray: 1 1; fill: none; }
.tree ul { position: relative; }
.tree li { height: 18px; display: flex; align-items: flex-start; }
.tree li span { line-height: 19px; height: 18px; }
.tree li i { width: 9px; height: 9px; margin-top: 3px; border: 1px solid #8c8c8c; background: linear-gradient(#2f4f9d, #2f4f9d) center/5px 1px no-repeat, linear-gradient(#2f4f9d, #2f4f9d) center/1px 5px no-repeat, #f5f5f5; flex: none; }
.tree li.open i { background: linear-gradient(#2f4f9d, #2f4f9d) center/5px 1px no-repeat, #f5f5f5; }
.d1 { padding-left: 4px; } .d2 { padding-left: 23px; } .d3 { padding-left: 59px; }
.d1 svg { width: 16px; height: 16px; margin: -1px 7px 0 7px; }
.d2 svg { width: 14px; height: 13px; margin: 1px 7px 0 9px; }
.d3 svg { width: 14px; height: 14px; margin: 0 8px 0 0; }
.sel span { background: #3297fd; color: #fff; width: 200px; box-shadow: inset 0 0 0 1px #112; }

/* Scroll bars */
.hscroll { height: 17px; flex: none; display: flex; align-items: center; background: #f2f2f2; border-top: 1px solid #e0e0e0; }
.explorer .hscroll, .htrack, .p4 .hscroll { padding-bottom: 3px; }
.explorer .thumb, .p4 .thumb { margin-top: 1px; }
.arr { width: 17px; display: flex; align-items: center; justify-content: center; flex: none; }
.arr::before { content: ""; border: 3.500px solid transparent; }
.arr.l::before { border-right: 4px solid #333; border-left: 0; }
.arr.r::before { border-left: 4px solid #333; border-right: 0; }
.arr.r { margin-left: auto; }
.arr.u::before { border-bottom: 4px solid #333; border-top: 0; }
.arr.d::before { border-top: 4px solid #333; border-bottom: 0; }
.arr.u, .arr.d { height: 17px; width: 15px; }
.thumb { height: 15px; border: 1px solid #999; border-radius: 2px; background: linear-gradient(#f2f2f2, #e5e5e5 45%, #cacaca 50%, #d8d8d8); display: flex; align-items: center; justify-content: center; }
.thumb i { width: 8px; height: 7px; background: repeating-linear-gradient(90deg, #666 0 2px, #eee 2px 3px); }
.thumb.ex { width: 111px; margin-left: 1px; }
.vscroll { width: 16px; background: #f3f3f3; border-left: 1px solid #e4e4e4; display: flex; flex-direction: column; align-items: center; }
.vthumb, .dthumb { width: 15px; border: 1px solid #8e8e8e; border-radius: 2px; background: linear-gradient(90deg, #f2f2f2, #e5e5e5 45%, #cacaca 50%, #d8d8d8); }
.vthumb { height: 277px; }
.vscroll .d { margin-top: auto; }
.p3 .vscroll .d { margin-bottom: 18px; }

/* Editor panes */
.editors { width: 767px; flex: none; overflow: hidden; display: flex; flex-direction: column; gap: 5px; }
.erow { display: flex; flex: none; }
.top { gap: 5px; height: 361px; } .bottom { gap: 4px; height: 362px; }
.pane { display: flex; flex-direction: column; flex: none; overflow: hidden; }
.p1 { width: 447px; } .p2 { width: 316px; margin-left: -1px; } .p3 { width: 441px; } .p4 { width: 323px; }
.p2, .p4 { border-left: 1px solid #8b8b99; }
.tabs { height: 21px; flex: none; display: flex; position: relative; }
.tab { height: 21px; line-height: 21px; border-top: 1px solid #8b8b99; border-right: 1px solid #8b8b99; background: #f5f5f5; display: flex; align-items: center; width: 185px; overflow: hidden; }
.tab .i8 { margin-left: 11px; }
.tab.wide { width: 100%; padding-left: 6px; border-right: 0; }
.tab.pl { padding-left: 2px; border-right: 1px solid #8b8b99; }
.tab-btns { flex: 1; border-bottom: 1px solid #8b8b99; display: flex; justify-content: flex-end; padding-right: 1px; }
.tab-btns b { width: 15px; height: 15px; border: 1px solid #68686c; border-radius: 2px; background: linear-gradient(#f5f5f5, #d5d5d5); display: flex; align-items: center; justify-content: center; }
.tab-btns .sp, .tab-btns .sp2 { margin-left: 4px; width: 16px; }
.tab-btns i { border: 4px solid transparent; }
.tab-btns .tl { border-left: 0; border-right-color: #333; }
.tab-btns .tr { border-right: 0; border-left-color: #999; }
.tab-btns .td { border-bottom: 0; border-top-color: #333; }
.tab-btns .tm { width: 8px; height: 6px; border: 1px solid #333; border-top-width: 2px; }
.body { flex: 1; display: flex; flex-direction: column; min-height: 0; border-bottom: 1px solid #8b8b99; }
.p1 .body, .p3 .body { border-right: 1px solid #8b8b99; }
.tools { height: 25px; flex: none; display: flex; align-items: center; }
.bottom .tools { padding-top: 1px; }
.z { width: 14px; height: 14px; margin-right: 4px; margin-bottom: 2px; }
.cut .z:first-child { margin-left: -9px; margin-right: 5px; }
.z.g { margin-left: 8px; }
.fit { width: 17px; height: 17px; margin: 0 3px 2px 7px; }
.sep { width: 1px; height: 19px; background: #888; margin: 0 3px 0 5px; }
.fn { width: 15px; height: 15px; margin: 0 4px 2px 1px; }
.gr { width: 16px; height: 16px; margin: 0 3px 2px 7px; }
.tools .grip { height: 22px; margin: 0 9px 0 4px; background: repeating-linear-gradient(#aaa 0 2px, transparent 2px 4px); }
.st { width: 16px; height: 15px; margin-right: 3px; }
.cu { width: 11px; height: 16px; margin: 0 5px 0 4px; }
.pressed { font-weight: normal; display: flex; align-items: center; gap: 3px; width: 52px; height: 22px; margin-left: 5px; padding-left: 2px; border: 1.500px solid #555; border-radius: 3px; background: linear-gradient(#cfcfcf, #e5e5e5); flex: none; }
.m5 { margin-left: 4px; }
.view { display: flex; flex: 1; min-height: 0; }
.canvas-col { flex: 1; display: flex; flex-direction: column; min-width: 0; }
.canvas { flex: 1; width: 100%; min-height: 0; }
.htrack { height: 16px; flex: none; background: #ededed; border-top: 1px solid #dcdcdc; display: flex; align-items: center; }
.tr-thumb { width: 482px; flex: none; }
.p2 .hscroll, .p4 .hscroll { overflow: hidden; }
.br-thumb { width: 307px; flex: none; margin-left: 1px; }
.p4t { margin-left: 125px; }
.p4m { margin-left: 187px; }
.canvas-box { flex: 1; position: relative; min-height: 0; display: flex; }
.over { position: absolute; inset: 0; height: 100%; }
.net-info { position: absolute; left: 19px; bottom: 4px; color: #bcbcbc; line-height: 15px; }

/* Property sheet */
.props { width: 213px; height: 728px; flex: none; border: 1px solid #8b8b99; border-top: 0; background: #fff; display: flex; flex-direction: column; font: 12px/18px "Liberation Sans", sans-serif; letter-spacing: -.05px; }
.cat { height: 19px; background: #d2d2d2; padding-left: 2px; display: flex; align-items: center; line-height: 20px; font-size: 11.500px; letter-spacing: -.35px; }
.cat i { width: 9px; height: 9px; border: 1px solid #888; background: linear-gradient(#2f4f9d, #2f4f9d) center/5px 1px no-repeat, #f5f5f5; margin-right: 2px; }
.prow { height: 19px; flex: none; display: flex; border-bottom: 1px solid #cfcfcf; margin-right: 1px; border-right: 1px solid #cfcfcf; font-size: 11.500px; line-height: 20px; letter-spacing: -.15px; }
.prow span { width: 105px; padding-left: 2px; border-right: 1px solid #cfcfcf; height: 18px; }
.prow em { font-style: normal; color: #858585; padding-left: 3px; line-height: 18px; font-size: 11px; letter-spacing: -.12px; }
.prow em.dk { color: #000; line-height: 20px; font-size: 11px; }
.prow em.mono { color: #000; font: 11.500px/19px "Liberation Mono", monospace; letter-spacing: -.9px; }
.prow b { font-weight: normal; margin: 1px 1px 0 auto; width: 13px; height: 16px; border: 1px solid #777; border-radius: 3px; background: linear-gradient(#f8f8f8, #d0d0d0); text-align: center; line-height: 16px; letter-spacing: -.4px; }
.prop-desc { margin-top: auto; height: 145px; border-top: 4px solid #ececec; background: #efefef; box-shadow: inset 0 1px #9a9aa4; padding: 4px 7px 0 2px; display: flex; justify-content: space-between; align-items: flex-start; }
.prop-desc strong { line-height: 18px; letter-spacing: -.15px; }
.help { width: 15px; height: 15px; margin-top: 1px; border-radius: 50%; background: radial-gradient(circle at 50% 25%, #6f98e2, #234da8); border: 1px solid #1c3f90; color: #fff; text-align: center; line-height: 14px; }

/* Status bar */
.status { height: 21px; flex: none; display: flex; align-items: center; justify-content: flex-end; padding: 4px 19px 0 0; border-top: 1px solid #a0a0a0; }
.progress { width: 200px; height: 15px; margin: 0 5px 0 7px; border: 1px solid #999; background: linear-gradient(#f5f5f5, #e7e7e7 45%, #c9c9c9 50%, #dcdcdc); position: relative; padding-left: 1px; }
.bar { height: 13px; background: #316ac5; }
.progress span { position: absolute; left: 88px; top: 0; font: 11px/13px "Liberation Sans", sans-serif; color: #3b9cf4; letter-spacing: -.7px; }
.stop { width: 11px; height: 11px; border: 1px solid #666; display: flex; align-items: center; justify-content: center; }
.taskbar { height: 2px; flex: none; background: linear-gradient(#101d38 0 1px, transparent 1px), repeating-linear-gradient(90deg, #7fa0d0 0 76px, #e5ecf5 76px 128px, #6f9bd0 128px 190px); }

/* Options dialog */
.dialog { position: absolute; left: 492px; top: 288px; width: 440px; height: 364px; border: 1.500px solid #3c4a5e; border-radius: 7px; box-shadow: inset 0 0 0 1px #dce9f8, 0 1px 7px 1px rgba(0,0,0,.6); padding: 0 6px 6px; background: linear-gradient(115deg, #b8c9e5, #c0d3ec 35%, #a9c1e0 60%, #bbd0ea 75%, #7e9abc); display: flex; flex-direction: column; }
.dlg-title { height: 28px; flex: none; display: flex; align-items: center; padding: 0 0 1px 2px; font: 12.500px/20px "Open Sans", sans-serif; letter-spacing: -.45px; }
.dlg-title b { margin-left: auto; width: 47px; height: 19px; align-self: flex-start; border: 1px solid #7889a2; border-top: 0; border-radius: 0 0 4px 4px; box-shadow: inset 0 0 0 1px #d9e6f6; display: flex; align-items: center; justify-content: center; }
.dlg-title .app-icon { margin-right: 4px; }
.dlg-body { flex: 1; border: 1px solid #46566c; background: #efefef; display: flex; flex-direction: column; min-height: 0; }
.cats { height: 56px; flex: none; background: #fff; border-bottom: 1px solid #bbb; display: flex; gap: 2px; padding: 1px 0 0 0; }
.catbtn { width: 84px; height: 54px; display: flex; flex-direction: column; align-items: center; justify-content: space-between; line-height: 15px; border: 1px solid transparent; }
.catbtn svg { width: 34px; height: 32px; }
.catbtn.on { border-color: #916cc9; background: #c1d2ee; margin-left: 1px; }
.keys text { font: bold 5px "Liberation Sans", sans-serif; fill: #777; }
.dtabs { height: 32px; flex: none; display: flex; align-items: flex-end; padding-left: 7px; }
.dtabs span { height: 19px; line-height: 21px; border: 1px solid #85858f; border-bottom: 0; background: linear-gradient(#f2f2f2, #e4e4e4 45%, #d0d0d0 50%, #dadada); text-align: center; }
.dtabs .t-app { width: 70px; }
.dtabs .t-on { width: 164px; height: 21px; line-height: 21px; background: #fff; margin-left: -1px; padding-right: 2px; }
.dtabs .t-files { width: 38px; border-left: 0; }
.dpanel { height: 182px; flex: none; margin: 0 7px 0 5px; border: 1px solid #8b8b99; display: flex; overflow: hidden; box-shadow: inset 0 3px #fff, inset 1px 0 #fff; padding-top: 3px; }
.form { flex: 1; padding: 25px 19px 0 29px; overflow: hidden; }
.fs { position: relative; border: 1px solid #d5dbe3; border-radius: 3px; height: 200px; padding: 19px 13px 0 12px; }
.fr { display: flex; justify-content: space-between; align-items: center; height: 21px; margin-bottom: 10px; }
.fr div { width: 218px; height: 21px; border: 1px solid #a0a0a5; background: #fff; padding: 0 2px; line-height: 21px; }
.fr .rt-field { text-align: right; }
.fs hr { margin: 0; border: 0; border-top: 1px solid #999; }
.dl { padding: 0 0 2px; }
.dthumb { height: 54px; margin-top: 1px; display: flex; align-items: center; justify-content: center; }
.dthumb i { width: 7px; height: 8px; background: repeating-linear-gradient(#666 0 2px, #eee 2px 3px); }
.dbtns { display: flex; gap: 7px; padding: 24px 11px 0 12px; }
.dbtns button { width: 67px; height: 22px; border: 1.500px solid #777; border-radius: 3px; background: linear-gradient(#f5f5f5, #e7e7e7 48%, #d3d3d3 52%, #dcdcdc); font: inherit; letter-spacing: inherit; padding: 0; color: #000; }
.dbtns .ok { margin-left: auto; border-color: #2a93c9; box-shadow: inset 0 0 0 1px #79d1ee; }
```
